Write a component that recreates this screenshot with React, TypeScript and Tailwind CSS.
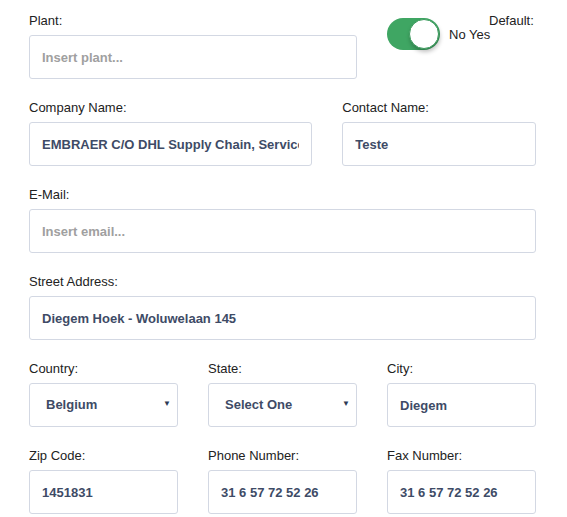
import { useState } from 'react';

const label = 'block text-[13px] leading-[15px] text-[#222] mb-[7px]';
const input =
  'w-full h-[44px] rounded-[3px] border border-[#d3d8e3] bg-white px-[12px] text-[13px] font-bold text-[#3e4b66] placeholder:text-[#a0a0a0] outline-none';

const Field = ({ title, value, placeholder, span }: { title: string; value?: string; placeholder?: string; span: string }) => (
  <div className={span}>
    <label className={label}>{title}</label>
    <input className={input} defaultValue={value} placeholder={placeholder} />
  </div>
);

const Select = ({ title, value, span }: { title: string; value: string; span: string }) => (
  <div className={span}>
    <label className={label}>{title}</label>
    <div className="relative h-[44px] rounded-[3px] border border-[#d3d8e3] bg-white flex items-center pl-[16px] text-[13px] font-bold text-[#3e4b66]">
      <span>{value}</span>
      <span className="absolute right-[6px] top-[14px] text-[8px] text-[#2c3a55]">▼</span>
    </div>
  </div>
);

const App = () => {
  const [on, setOn] = useState(true);

  return (
    <div className="min-h-screen bg-white pl-[29px] pr-[31px] pt-[13px] font-['Liberation_Sans',Arial,sans-serif]">
      <div className="grid grid-cols-12 gap-x-[30px] gap-y-[21px]">
        {/* Plant + default toggle */}
        <Field title="Plant:" placeholder="Insert plant..." span="col-span-8" />
        <div className="col-span-4 relative">
          <button
            onClick={() => setOn(!on)}
            className={`absolute left-0 top-[5px] w-[53px] h-[32px] rounded-full ${on ? 'bg-[#3fa663]' : 'bg-gray-300'}`}
          >
            <span
              className={`absolute top-[1px] w-[30px] h-[30px] rounded-full bg-white border border-[#3a9a5c] shadow-[1px_3px_4px_rgba(0,0,0,0.25)] ${on ? 'left-[22px]' : 'left-[1px]'}`}
            />
          </button>
          <span className="absolute left-[62px] top-[14px] text-[13px] leading-[15px] text-[#222]">No Yes</span>
          <span className="absolute left-[102px] top-0 text-[13px] leading-[15px] text-[#222]">Default:</span>
        </div>

        <Field title="Company Name:" value="EMBRAER C/O DHL Supply Chain, Services" span="col-span-7" />
        <Field title="Contact Name:" value="Teste" span="col-span-5" />

        <Field title="E-Mail:" placeholder="Insert email..." span="col-span-12" />

        <Field title="Street Address:" value="Diegem Hoek - Woluwelaan 145" span="col-span-12" />

        <Select title="Country:" value="Belgium" span="col-span-4" />
        <Select title="State:" value="Select One" span="col-span-4" />
        <Field title="City:" value="Diegem" span="col-span-4" />

        <Field title="Zip Code:" value="1451831" span="col-span-4" />
        <Field title="Phone Number:" value="31 6 57 72 52 26" span="col-span-4" />
        <Field title="Fax Number:" value="31 6 57 72 52 26" span="col-span-4" />
      </div>
    </div>
  );
};

export default App;
